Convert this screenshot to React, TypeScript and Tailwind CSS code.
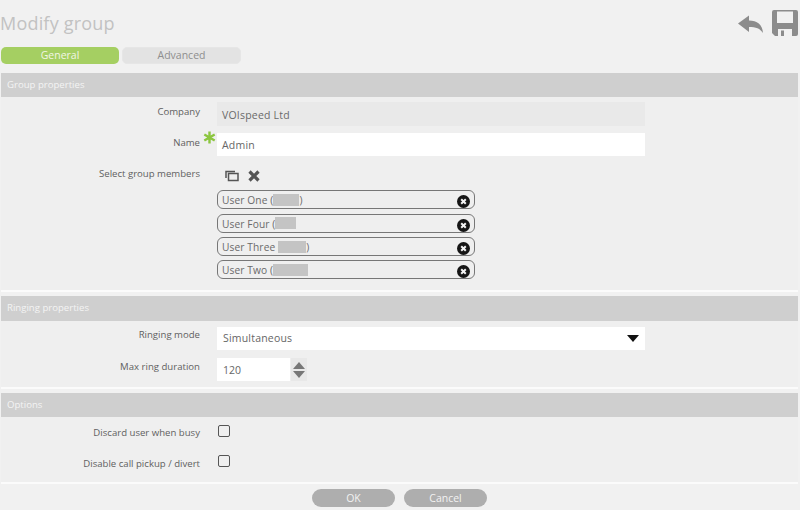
import React from "react";

const font = { fontFamily: '"Open Sans", sans-serif' };

function Section({ title, headClass = "h-[24px] leading-[23px]", bodyClass, children }: { title: string; headClass?: string; bodyClass: string; children: React.ReactNode }) {
  return (
    <section className="mr-[2px] ml-[1px]">
      <div className={`bg-[#cfcfcf] pl-[6px] text-[9.6px] text-[#f4f4f4] ${headClass}`}>{title}</div>
      <div className={`border-b-2 border-[#fbfbfb] bg-[#efefef] ${bodyClass}`}>{children}</div>
    </section>
  );
}

function Label({ children, className = "" }: { children: React.ReactNode; className?: string }) {
  return <div className={`w-[199px] shrink-0 text-right text-[9.6px] leading-[14px] text-[#5f5f5f] ${className}`}>{children}</div>;
}

function CloseDot() {
  return (
    <svg width="13" height="13" viewBox="0 0 13 13" className="shrink-0">
      <circle cx="6.5" cy="6.5" r="6.5" fill="#151515" />
      <path d="M4.2 4.2l4.6 4.6M8.8 4.2l-4.6 4.6" stroke="#f2f2f2" strokeWidth="2" />
    </svg>
  );
}

function Member({ name, after, blur, gap = "", blurTop, mt }: { name: string; after?: string; blur: number; gap?: string; blurTop: string; mt: string }) {
  return (
    <div className={`relative flex h-[19px] w-[258px] items-center justify-between rounded-[6px] border border-[#777] pr-[4px] pl-[4px] text-[10.2px] tracking-[0.1px] text-[#6a6a6a] ${mt}`}>
      <span className="flex items-center leading-[14px]">
        <span className="whitespace-pre">{name} (</span>
        <span className={`relative z-10 h-[12px] bg-[#c4c4c4] ${gap} ${blurTop}`} style={{ width: blur }} />
        {after && <span>{after}</span>}
      </span>
      <span className="mt-[3px]"><CloseDot /></span>
    </div>
  );
}

export default function App() {
  return (
    <div style={font} className="h-[510px] w-[800px] overflow-hidden bg-[#f1f1f1]">
      <header className="flex h-[47px] items-start justify-between">
        <h1 className="pt-[11px] text-[18px] leading-[24px] tracking-[0.2px] text-[#c2c2c2]">Modify group</h1>
        <div className="flex items-start pt-[10px] pr-[2px]">
          <svg width="26" height="20" viewBox="0 0 26 20" className="mt-[4px] mr-[8px]">
            <path d="M0 9.5 11 1.5v5c8 0 13.5 4 14 12.5-3-4.5-7-6-14-6v5z" fill="#8c8c8c" />
          </svg>
          <svg width="26" height="26" viewBox="0 0 26 26">
            <path fillRule="evenodd" d="M2 0h22a2 2 0 0 1 2 2v22a2 2 0 0 1-2 2H3l-3-3V2a2 2 0 0 1 2-2zM5 1.5v11.5h16V1.5zM6 19v7h14v-7zM9 20.5h3v5.5H9z" fill="#8c8c8c" />
          </svg>
        </div>
      </header>

      <nav className="flex h-[26px] items-start gap-[3px] pl-[1px] text-[10.5px]">
        <div className="h-[17px] w-[118px] rounded-[5px] bg-[#a5cf62] text-center leading-[17px] text-[#f1f6e4]">General</div>
        <div className="h-[17px] w-[119px] rounded-[5px] border border-[#e6e6e6] bg-[#e3e3e3] text-center leading-[15px] text-[#8e8e8e]">Advanced</div>
      </nav>

      <Section title="Group properties" bodyClass="h-[195px] pt-[5px]">
        <div className="flex">
          <Label className="pt-[3px]">Company</Label>
          <div className="ml-[17px] h-[24px] w-[428px] bg-[#e9e9e9] pl-[5px] text-[10.5px] leading-[26px] tracking-[0.2px] text-[#6a6a6a]">VOIspeed Ltd</div>
        </div>
        <div className="mt-[7px] flex">
          <Label className="pt-[3px]">Name</Label>
          <div className="relative ml-[17px] h-[23px] w-[428px] bg-white pl-[5px] text-[10.5px] leading-[24px] tracking-[0.2px] text-[#666]">
            Admin
            <svg width="13" height="13" viewBox="0 0 13 13" className="absolute top-[-2px] left-[-14px]">
              <path d="M6.5 0.5v12M1.3 3.5l10.4 6M11.7 3.5l-10.4 6" stroke="#8cc63f" strokeWidth="2.4" />
            </svg>
          </div>
        </div>
        <div className="mt-[8px] flex">
          <Label className="pt-[3px]">Select group members</Label>
          <div className="ml-[25px] flex items-center gap-[9px] pt-[6px]">
            <svg width="14" height="12" viewBox="0 0 14 12">
              <path d="M1 8V1.5h9M3.5 3.5h9.5v7H3.5z" fill="none" stroke="#555" strokeWidth="1.5" />
            </svg>
            <svg width="12" height="12" viewBox="0 0 12 12">
              <path d="M1.5 1.5l9 9M10.5 1.5l-9 9" stroke="#555" strokeWidth="3.2" />
            </svg>
          </div>
        </div>
        <div className="ml-[216px] pt-[8px]">
          <Member name="User One" after=")" blur={26} blurTop="mt-[1px]" mt="" />
          <Member name="User Four" blur={21} blurTop="-mt-[1px]" mt="mt-[5px]" />
          <Member name="User Three" after=")" blur={28} gap="-ml-[3px]" blurTop="" mt="mt-[4px]" />
          <Member name="User Two" blur={35} blurTop="" mt="mt-[4px]" />
        </div>
      </Section>

      <div className="h-[4px]" />

      <Section title="Ringing properties" headClass="h-[25px] leading-[24px]" bodyClass="h-[68px] pt-[6px]">
        <div className="flex">
          <Label className="pt-[1px]">Ringing mode</Label>
          <div className="ml-[17px] flex h-[23px] w-[428px] items-center justify-between bg-white pr-[6px] pl-[6px] text-[10.5px] tracking-[0.2px] text-[#666]">
            Simultaneous
            <svg width="12" height="7" viewBox="0 0 12 7"><path d="M0 0h12L6 7z" fill="#111" /></svg>
          </div>
        </div>
        <div className="mt-[8px] flex">
          <Label className="pt-[2px]">Max ring duration</Label>
          <div className="ml-[17px] h-[23px] w-[73px] bg-white pl-[6px] text-[10.5px] leading-[25px] text-[#666]">120</div>
          <div className="ml-[1px] flex h-[23px] w-[16px] flex-col items-center justify-center gap-[2px] bg-[#e8e8e8]">
            <svg width="12" height="7" viewBox="0 0 12 7"><path d="M6 0l6 7H0z" fill="#777" /></svg>
            <svg width="12" height="7" viewBox="0 0 12 7"><path d="M0 0h12L6 7z" fill="#777" /></svg>
          </div>
        </div>
      </Section>

      <div className="h-[4px]" />

      <Section title="Options" bodyClass="h-[67px] pt-[8px]">
        <div className="flex items-start">
          <Label className="pt-[1px]">Discard user when busy</Label>
          <div className="ml-[18px] h-[12px] w-[12px] rounded-[2px] border-[1.5px] border-[#555]" />
        </div>
        <div className="mt-[15px] flex items-start">
          <Label className="pt-[2px]">Disable call pickup / divert</Label>
          <div className="ml-[18px] h-[12px] w-[12px] rounded-[2px] border-[1.5px] border-[#555]" />
        </div>
      </Section>

      <footer className="flex justify-center gap-[9px] pt-[5px] pr-[1px] text-[10.5px] text-[#f2f2f2]">
        <div className="h-[18px] w-[83px] rounded-full bg-[#aeaeae] text-center leading-[19px]">OK</div>
        <div className="h-[18px] w-[83px] rounded-full bg-[#aeaeae] text-center leading-[19px]">Cancel</div>
      </footer>
    </div>
  );
}
